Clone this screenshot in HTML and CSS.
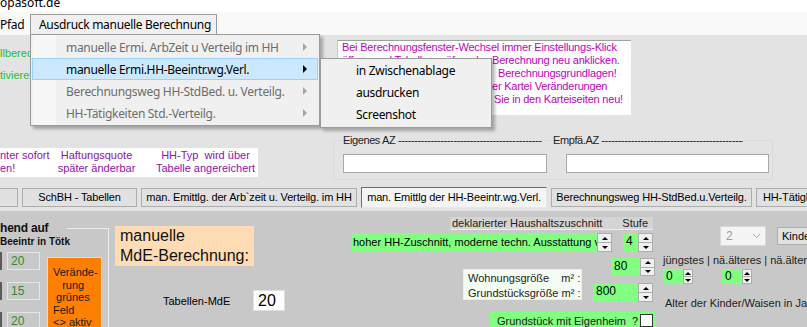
FILE: index.html
```html
<!DOCTYPE html>
<html lang="de">
<head>
  <meta charset="UTF-8">
  <title>opasoft.de - Ausdruck manuelle Berechnung</title>
  <link rel="stylesheet" href="styles.css">
</head>
<body>

  <!-- 1) TITLE + MENU BAR -->
  <div class="titlebar"><span>opasoft.de</span></div>
  <div class="menubar">
    <span class="menu-item">Pfad</span>
    <span class="menu-item open">Ausdruck manuelle Berechnung</span>
  </div>

  <!-- 2) OPEN MENU + SUBMENU (lie over the form) -->
  <div class="dropdown">
    <div class="dd-item">manuelle Ermi. ArbZeit u Verteilg im HH<i class="arrow"></i></div>
    <div class="dd-item active">manuelle Ermi.HH-Beeintr.wg.Verl.<i class="arrow"></i></div>
    <div class="dd-item">Berechnungsweg HH-StdBed. u. Verteilg.<i class="arrow"></i></div>
    <div class="dd-item">HH-Tätigkeiten Std.-Verteilg.<i class="arrow"></i></div>
  </div>
  <div class="submenu">
    <div class="sub-item">in Zwischenablage</div>
    <div class="sub-item">ausdrucken</div>
    <div class="sub-item">Screenshot</div>
  </div>

  <!-- 3) UPPER FORM AREA -->
  <div class="upper">
    <div class="upper-row top">
      <div class="hints">
        <div>llberechnung</div>
        <div class="second">tivieren</div>
      </div>
      <div class="info">
        <div>Bei Berechnungsfenster-Wechsel immer Einstellungs-Klick</div>
        <div><span class="cut w150">öffnen und Tabellen prüfen, dann die </span>Berechnung neu anklicken.</div>
        <div><span class="cut w156">Prüfen Sie vor dem Druck alle </span>Berechnungsgrundlagen!</div>
        <div><span class="cut w150">Nehmen Sie nach Eingaben in d</span>er Kartei Veränderungen</div>
        <div><span class="cut w152">vor, so berechnen </span>Sie in den Karteiseiten neu!</div>
      </div>
    </div>
    <div class="upper-row bottom">
      <div class="note">
        <div class="note-col c1">nter sofort<br>en!</div>
        <div class="note-col c2">Haftungsquote<br>später änderbar</div>
        <div class="note-col c3">HH-Typ&nbsp; wird über<br>Tabelle angereichert</div>
      </div>
      <div class="az-group">
        <div class="az-labels">
          <span class="az-label first">Eigenes AZ -------------------------------------------------------------------------------</span>
          <span class="az-label">Empfä.AZ -------------------------------------------------------------------------------</span>
        </div>
        <div class="az-inputs">
          <div class="textbox"></div>
          <div class="textbox second"></div>
        </div>
      </div>
    </div>
  </div>

  <!-- 4) PAGE BUTTONS -->
  <div class="tabs">
    <div class="tab t0"></div>
    <div class="tab t1">SchBH - Tabellen</div>
    <div class="tab t2">man. Emittlg. der Arb`zeit u. Verteilg. im HH</div>
    <div class="tab t3 active">man. Emittlg der HH-Beeintr.wg.Verl.</div>
    <div class="tab t4">Berechnungsweg HH-StdBed.u.Verteilg.</div>
    <div class="tab t5">HH-Tätigkeiten Std.-Verteilg.</div>
  </div>

  <!-- 5) LOWER PANEL -->
  <div class="panel">

    <div class="col-grp">
      <div class="grp">
        <div class="grp-caption">hend auf</div>
        <div class="grp-sub">Beeintr in Tötk</div>
        <div class="grp-body">
          <div class="cells">
            <div class="cell-row"><i class="edge"></i><div class="cell">20</div></div>
            <div class="cell-row"><i class="edge"></i><div class="cell">15</div></div>
            <div class="cell-row"><i class="edge"></i><div class="cell">20</div></div>
          </div>
          <div class="hint-orange">Verände-<br>&nbsp;&nbsp;&nbsp;rung<br>&nbsp;grünes<br>Feld<br>&lt;&gt; aktiv</div>
        </div>
      </div>
    </div>

    <div class="col-mde">
      <div class="mde-title">manuelle<br>MdE-Berechnung:</div>
      <div class="mde-row">
        <span class="mde-label">Tabellen-MdE</span>
        <div class="mde-input">20</div>
      </div>
    </div>

    <div class="col-zus">
      <div class="zus-head">
        <span>deklarierter Haushaltszuschnitt</span>
        <span class="stufe">Stufe</span>
      </div>
      <div class="zus-row1">
        <div class="combo-green">
          <div class="combo-text">hoher HH-Zuschnitt, moderne techn. Ausstattung von Haus und Garten</div>
          <div class="spin-btns"><span class="up"></span><span class="down"></span></div>
        </div>
        <div class="spin stufe-spin">
          <div class="spin-val">4</div>
          <div class="spin-btns"><span class="up"></span><span class="down"></span></div>
        </div>
      </div>
      <div class="zus-row2">
        <div class="spin wohn-spin">
          <div class="spin-val">80</div>
          <div class="spin-btns"><span class="up"></span><span class="down"></span></div>
        </div>
      </div>
      <div class="zus-row3">
        <div class="size-box">Wohnungsgröße &nbsp;&nbsp; m² :<br>Grundstücksgröße m² :</div>
        <div class="spin grund-spin">
          <div class="spin-val">800</div>
          <div class="spin-btns"><span class="up"></span><span class="down"></span></div>
        </div>
      </div>
      <div class="zus-row4">
        <div class="eigenheim">
          <span>Grundstück mit Eigenheim&nbsp; ?</span>
          <i class="checkbox"></i>
        </div>
      </div>
    </div>

    <div class="col-kids">
      <div class="kids-top">
        <div class="combo-dis">
          <span>2</span>
          <svg width="9" height="6" viewBox="0 0 9 6"><polyline points="1,1 4.5,4.5 8,1" fill="none" stroke="#a8a8a8" stroke-width="1"/></svg>
        </div>
        <div class="btn-kinde">Kinder</div>
      </div>
      <div class="kids-label">jüngstes | nä.älteres | nä.älteres</div>
      <div class="kids-spins">
        <div class="spin small">
          <div class="spin-val">0</div>
          <div class="spin-btns"><span class="up"></span><span class="down"></span></div>
        </div>
        <div class="spin small second">
          <div class="spin-val">0</div>
          <div class="spin-btns"><span class="up"></span><span class="down"></span></div>
        </div>
      </div>
      <div class="kids-age">Alter der Kinder/Waisen in Jahren</div>
    </div>

  </div>

</body>
</html>
```

FILE: styles.css
```css
/********************************************************
 * 1) PAGE
 ********************************************************/
html, body {
  margin: 0;
  padding: 0;
}

body {
  width: 807px;
  height: 327px;
  overflow: hidden;
  position: relative;
  background: #e3e3e3;
  font-family: "Liberation Sans", Arial, sans-serif;
  font-size: 11px;
  color: #000;
}

/********************************************************
 * 2) TITLE + MENU BAR (Windows look)
 ********************************************************/
.titlebar {
  height: 12px;
  overflow: hidden;
  background: #fff;
  font-family: "Noto Sans", sans-serif;
  font-size: 12px;
}
.titlebar span {
  display: block;
  line-height: 12px;
  margin-top: -3px;
}

.menubar {
  height: 23px;
  display: flex;
  background: #f9f9f9;
  font-family: "Noto Sans", sans-serif;
  font-size: 12px;
  letter-spacing: -0.3px;
}
.menu-item {
  width: 30px;
  margin-top: 2px;
  line-height: 21px;
  white-space: nowrap;
}
.menu-item.open {
  width: 187px;
  box-sizing: border-box;
  padding-left: 8px;
  line-height: 20px;
  background: #f0f0f0;
  border: 1px solid #9a9a9a;
  border-bottom: none;
}

/* dropdown + submenu are overlays */
.dropdown,
.submenu {
  position: absolute;
  box-sizing: border-box;
  padding: 1px;
  border: 1px solid #9a9a9a;
  background: #f0f0f0;
  box-shadow: 3px 3px 3px rgba(0, 0, 0, 0.28);
  font-family: "Noto Sans", sans-serif;
  font-size: 12px;
  letter-spacing: -0.3px;
  white-space: nowrap;
}
.dropdown {
  left: 30px;
  top: 34px;
  width: 290px;
  z-index: 10;
  background: linear-gradient(to right, #f0f0f0 2px, #f7f7f7 2px, #f7f7f7 25px, #f0f0f0 25px);
}
.dd-item {
  height: 22px;
  box-sizing: border-box;
  padding-left: 34px;
  display: flex;
  align-items: center;
  color: #6d6d6d;
}
.dd-item.active {
  padding-left: 33px;
  color: #000;
  background: #cce8ff;
  border: 1px solid #99d1ff;
}
.arrow {
  margin-left: auto;
  margin-right: 11px;
  border-left: 4px solid #a6a6a6;
  border-top: 4px solid transparent;
  border-bottom: 4px solid transparent;
}
.dd-item.active .arrow {
  margin-right: 10px;
  border-left-color: #000;
}

.submenu {
  left: 320px;
  top: 58px;
  width: 172px;
  z-index: 11;
}
.sub-item {
  height: 22px;
  line-height: 22px;
  padding-left: 34px;
}

/********************************************************
 * 3) UPPER FORM AREA
 ********************************************************/
.upper {
  height: 150px;
}
.upper-row {
  display: flex;
}
.upper-row.top {
  height: 95px;
}
.upper-row.bottom {
  height: 55px;
}

.hints {
  width: 337px;
  padding-top: 11px;
  line-height: 14px;
  color: #1fbf1f;
  white-space: nowrap;
  overflow: hidden;
}
.hints .second {
  margin-top: 8px;
}

.info {
  width: 294px;
  height: 75px;
  margin-top: 5px;
  box-sizing: border-box;
  padding-left: 4px;
  background: #fff;
  border-top: 1px solid #a0a0a0;
  border-left: 1px solid #c8c8c8;
  color: #c000c0;
  line-height: 13px;
  letter-spacing: -0.2px;
  white-space: nowrap;
  overflow: hidden;
}
/* text hidden below the submenu */
.cut {
  display: inline-block;
  vertical-align: top;
  overflow: hidden;
}
.w150 { width: 150px; }
.w152 { width: 152px; }
.w156 { width: 156px; }

.note {
  width: 258px;
  height: 29px;
  margin-top: 18px;
  box-sizing: border-box;
  padding-top: 1px;
  display: flex;
  background: #fff;
  color: #9010b0;
  line-height: 13px;
  white-space: nowrap;
}
.note-col.c1 {
  width: 52px;
  overflow: hidden;
}
.note-col.c2 {
  width: 89px;
  text-align: center;
}
.note-col.c3 {
  flex: 1;
  padding-left: 12px;
  text-align: center;
}

.az-group {
  width: 440px;
  height: 40px;
  margin-left: 75px;
  margin-top: 10px;
  box-sizing: border-box;
  padding-left: 9px;
  border: 1px solid #dbdbdb;
}
.az-labels {
  display: flex;
  margin-top: -7px;
  line-height: 13px;
  color: #222;
  white-space: nowrap;
}
.az-label {
  width: 190px;
  overflow: hidden;
  background: #e3e3e3;
  letter-spacing: -0.4px;
}
.az-label.first {
  width: 199px;
  margin-right: 11px;
}
.az-inputs {
  display: flex;
  margin-top: 7px;
}
.textbox {
  width: 204px;
  height: 19px;
  box-sizing: border-box;
  background: #fff;
  border: 1px solid #a8a8a8;
}
.textbox.second {
  width: 203px;
  margin-left: 19px;
}

/********************************************************
 * 4) PAGE BUTTONS
 ********************************************************/
.tabs {
  height: 26px;
  box-sizing: border-box;
  padding-top: 3px;
  display: flex;
  gap: 4px;
  overflow: hidden;
}
.tab {
  flex: none;
  height: 19px;
  box-sizing: border-box;
  background: #e1e1e1;
  border: 1px solid #adadad;
  line-height: 17px;
  text-align: center;
  white-space: nowrap;
  overflow: hidden;
  letter-spacing: -0.15px;
}
.tab.active {
  height: 21px;
  margin-top: -1px;
  line-height: 19px;
  background: #f4f4f4;
  border-color: #6e6e6e #e8e8e8 #e8e8e8 #6e6e6e;
}
.t0 { width: 18px; border-left: none; }
.t1 { width: 115px; }
.t2 { width: 216px; }
.t3 { width: 186px; }
.t4 { width: 201px; }
.t5 { width: 80px; text-align: left; padding-left: 6px; }

/********************************************************
 * 5) LOWER PANEL
 ********************************************************/
.panel {
  height: 116px;
  display: flex;
  background: #c8c8c8;
  overflow: hidden;
}

/* 5a) group box on the left */
.col-grp {
  width: 109px;
  flex: none;
}
.grp {
  margin-top: 17px;
  height: 120px;
  border-top: 1px solid #ebebeb;
  border-right: 1px solid #ebebeb;
}
.grp-caption {
  width: fit-content;
  margin-top: -8px;
  padding-right: 19px;
  background: #c8c8c8;
  font-size: 12px;
  font-weight: bold;
  line-height: 14px;
  letter-spacing: -0.2px;
  color: #111;
}
.grp-sub {
  font-size: 10px;
  font-weight: bold;
  line-height: 13px;
  color: #111;
}
.grp-body {
  display: flex;
  margin-top: 4px;
}
.cells {
  display: flex;
  flex-direction: column;
  gap: 12px;
}
.cell-row {
  display: flex;
}
.edge {
  width: 2px;
  height: 18px;
  margin-right: 5px;
  background: #5a5a5a;
}
.cell {
  width: 33px;
  height: 18px;
  box-sizing: border-box;
  padding-left: 3px;
  border: 1px solid #e6e6e6;
  color: #2e8b2e;
  font-size: 12px;
  line-height: 16px;
}
.hint-orange {
  width: 55px;
  height: 80px;
  margin-left: 7px;
  margin-top: 5px;
  box-sizing: border-box;
  padding: 8px 0 0 5px;
  background: #ff8000;
  border: 1px solid #dcdcdc;
  line-height: 12.5px;
  white-space: nowrap;
  color: #1a1a1a;
}

/* 5b) MdE block */
.col-mde {
  width: 237px;
  margin-left: 6px;
  flex: none;
}
.mde-title {
  width: 139px;
  height: 40px;
  margin-top: 15px;
  box-sizing: border-box;
  padding-left: 5px;
  background: #ffdcb4;
  font-size: 16px;
  line-height: 20px;
  color: #111;
}
.mde-row {
  display: flex;
  align-items: center;
  margin-top: 24px;
}
.mde-label {
  width: 90px;
  margin-left: 48px;
}
.mde-input {
  width: 32px;
  height: 21px;
  box-sizing: border-box;
  padding-left: 4px;
  background: #fff;
  border: 1px solid #e0e0e0;
  font-size: 16px;
  line-height: 19px;
}

/* 5c) household block */
.col-zus {
  width: 303px;
  flex: none;
}
.zus-head {
  display: flex;
  width: 203px;
  height: 13px;
  margin-top: 6px;
  margin-left: 98px;
  padding: 0 5px 0 2px;
  box-sizing: border-box;
  background: #d4d4d4;
  border-bottom: 1px solid #ececec;
  line-height: 13px;
  color: #222;
}
.zus-head .stufe {
  margin-left: auto;
}

.zus-row1 {
  display: flex;
  margin-top: 3px;
}
.combo-green {
  display: flex;
  width: 260px;
  height: 19px;
  background: #80ff80;
}
.combo-text {
  flex: 1;
  overflow: hidden;
  white-space: nowrap;
  line-height: 19px;
  padding-left: 1px;
}

.spin {
  display: flex;
  height: 19px;
}
.spin-val {
  flex: 1;
  padding-left: 3px;
  background: #80ff80;
  font-size: 12px;
  line-height: 17px;
}
.spin-btns {
  width: 15px;
  display: flex;
  flex-direction: column;
}
.spin-btns span {
  flex: 1;
  display: flex;
  align-items: center;
  justify-content: center;
  background: #f0f0f0;
  border: 1px solid #adadad;
}
.spin-btns span + span {
  border-top: none;
}
.spin-btns .up::after,
.spin-btns .down::after {
  content: "";
  border-left: 3px solid transparent;
  border-right: 3px solid transparent;
}
.spin-btns .up::after {
  border-bottom: 3px solid #000;
}
.spin-btns .down::after {
  border-top: 3px solid #000;
}

.stufe-spin {
  width: 30px;
  margin-left: 11px;
}
.zus-row2 {
  display: flex;
  justify-content: flex-end;
  margin-top: 6px;
}
.wohn-spin {
  width: 44px;
  height: 18px;
}
.zus-row3 {
  display: flex;
  margin-top: -7px;
}
.size-box {
  width: 119px;
  height: 31px;
  margin-left: 111px;
  box-sizing: border-box;
  padding: 1px 0 0 4px;
  background: #f4fcf4;
  border: 1px solid #e6f2e6;
  line-height: 15px;
  white-space: nowrap;
  color: #222;
}
.grund-spin {
  width: 60px;
  margin-left: 11px;
  margin-top: 14px;
}
.zus-row4 {
  margin-top: 10px;
}
.eigenheim {
  display: flex;
  align-items: center;
  width: 165px;
  height: 17px;
  margin-left: 138px;
  box-sizing: border-box;
  padding-left: 7px;
  background: #80ff80;
  color: #222;
}
.checkbox {
  width: 13px;
  height: 13px;
  margin-left: auto;
  margin-right: 2px;
  box-sizing: border-box;
  background: #fff;
  border: 1px solid #333;
}

/* 5d) children block */
.col-kids {
  flex: 1;
  margin-left: 8px;
  white-space: nowrap;
}
.kids-top {
  display: flex;
  margin-top: 15px;
}
.combo-dis {
  display: flex;
  align-items: center;
  justify-content: space-between;
  width: 46px;
  height: 20px;
  margin-left: 57px;
  box-sizing: border-box;
  padding: 0 4px 0 5px;
  background: #f4f4f4;
  border: 1px solid #dadada;
  color: #9a9a9a;
  font-size: 12px;
}
.btn-kinde {
  width: 40px;
  height: 18px;
  margin-left: 11px;
  margin-top: 1px;
  box-sizing: border-box;
  padding-left: 4px;
  background: #e1e1e1;
  border: 1px solid #adadad;
  line-height: 16px;
  overflow: hidden;
}
.kids-label {
  margin-top: 7px;
  line-height: 14px;
  color: #222;
}
.kids-spins {
  display: flex;
  margin-top: 2px;
}
.spin.small {
  width: 30px;
  height: 15px;
}
.spin.small .spin-val {
  line-height: 14px;
}
.spin.small .spin-btns {
  width: 10px;
}
.spin.small.second {
  margin-left: 29px;
}
.kids-age {
  margin-top: 12px;
  margin-left: 2px;
  line-height: 14px;
  color: #222;
}
```
